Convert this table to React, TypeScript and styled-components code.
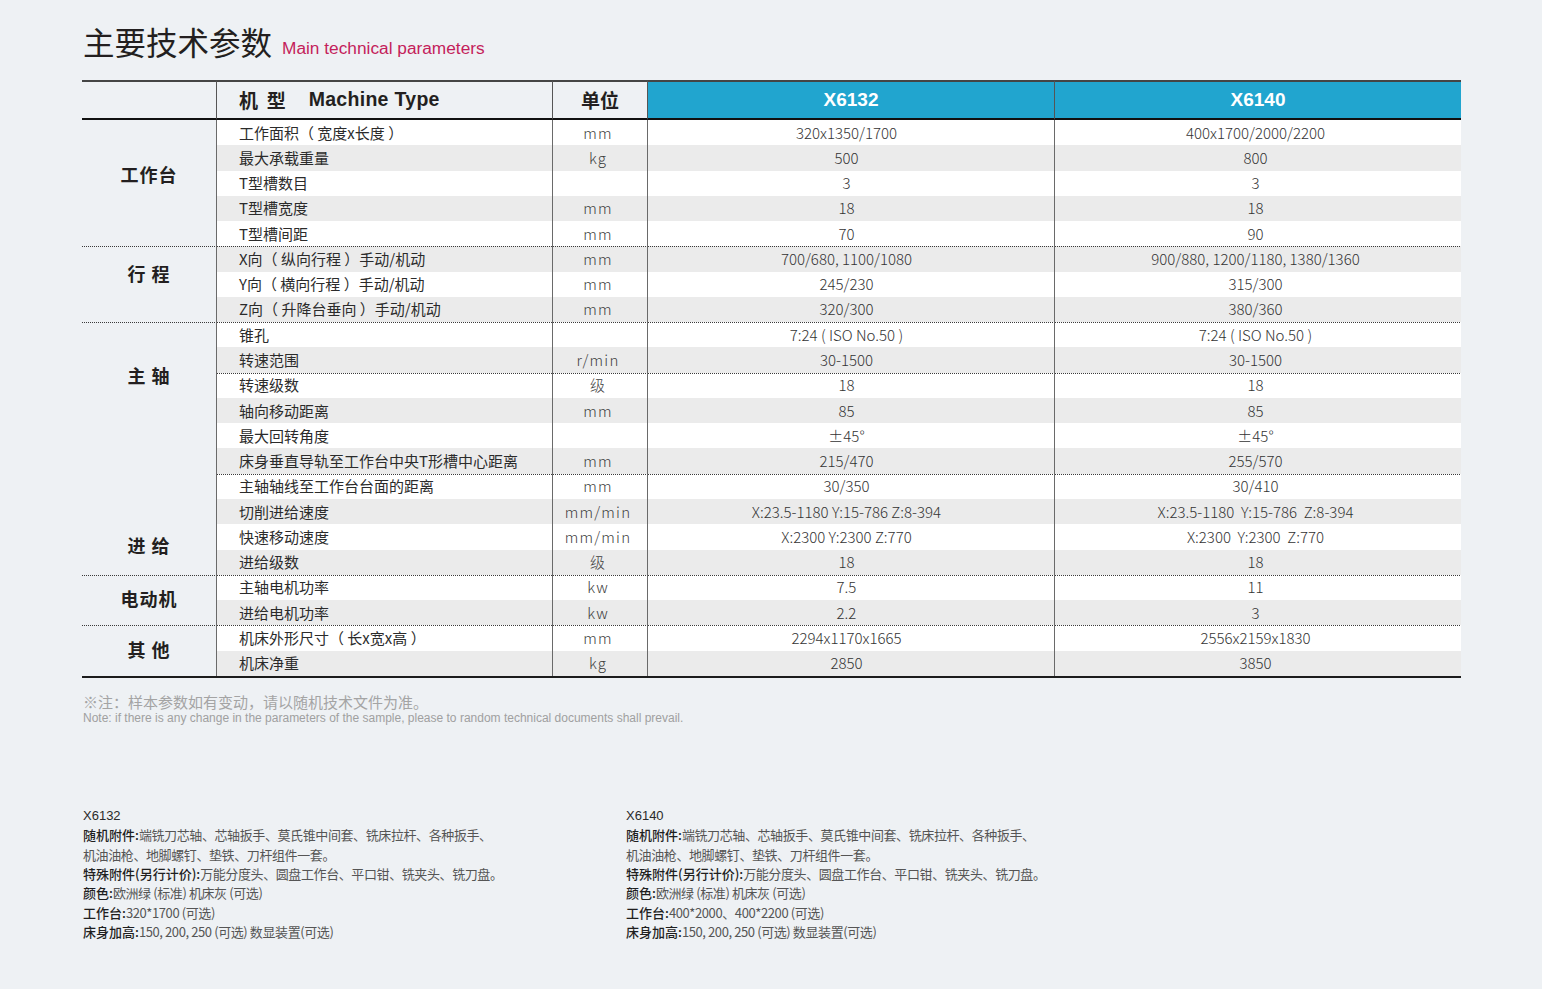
import React from 'react';
import styled, { createGlobalStyle } from 'styled-components';

const GlobalStyle = createGlobalStyle`
  html, body { margin: 0; padding: 0; background: #eef1f4; }
  body { font-family: "Noto Sans CJK SC", "Noto Sans", sans-serif; color: #231f20; }
`;

const CJK = `"Noto Sans CJK SC", "Noto Sans", sans-serif`;
const LATIN = `"Liberation Sans", Arial, "Noto Sans CJK SC", sans-serif`;

const Page = styled.div`
  width: 1542px;
  height: 989px;
  box-sizing: border-box;
  padding: 24px 0 0 83px;
  background: #eef1f4;
  overflow: hidden;
`;

const TitleRow = styled.div`
  display: flex;
  align-items: baseline;
  gap: 10px;
  height: 56px;
`;

const TitleCn = styled.h1`
  margin: 0;
  font-family: ${CJK};
  font-size: 31.5px;
  font-weight: 400;
  line-height: 34px;
  color: #231f20;
`;

const TitleEn = styled.span`
  font-family: ${LATIN};
  font-size: 17.3px;
  color: #c41e5b;
  position: relative;
  top: -1px;
`;

const Table = styled.div`
  display: grid;
  width: 1379px;
  margin-left: -1px;
  grid-template-columns: 134px 336px 95px 407px 407px;
  grid-template-rows: 40px repeat(22, 25.273px);
  border-bottom: 2px solid #1c1c1c;
`;

const HeadCell = styled.div<{ $accent?: boolean; $line?: boolean; $start?: boolean }>`
  box-sizing: border-box;
  display: flex;
  align-items: center;
  justify-content: ${p => (p.$start ? 'flex-start' : 'center')};
  padding-left: ${p => (p.$start ? '22px' : '0')};
  padding-bottom: 1px;
  border-top: 2px solid #454545;
  border-bottom: 2px solid #111;
  border-left: ${p => (p.$line ? '1px solid #555' : 'none')};
  background: ${p => (p.$accent ? '#21a5cf' : 'transparent')};
  color: ${p => (p.$accent ? '#fff' : '#231f20')};
  font-family: ${LATIN};
  font-size: 19px;
  font-weight: 700;
`;

const HeadCn = styled.span`
  font-family: ${CJK};
  font-weight: 700;
  font-size: 19px;
  line-height: 22px;
  white-space: pre;
`;

const HeadEn = styled.span`
  font-family: ${LATIN};
  font-weight: 700;
  font-size: 19.5px;
  letter-spacing: 0.3px;
  margin-left: 23px;
`;

const dashBg = `repeating-linear-gradient(to right, #3a3a3a 0 1px, transparent 1px 2px)`;

const GroupCell = styled.div<{ $row: number; $span: number; $dash: boolean }>`
  grid-column: 1;
  grid-row: ${p => p.$row} / span ${p => p.$span};
  display: flex;
  align-items: center;
  justify-content: center;
  background-image: ${p => (p.$dash ? dashBg : 'none')};
  background-size: 100% 1px;
  background-repeat: no-repeat;
  background-position: top left;
`;

const GroupLabel = styled.span<{ $shift: number }>`
  font-family: ${CJK};
  font-size: 18px;
  font-weight: 700;
  letter-spacing: 1px;
  white-space: pre;
  color: #231f20;
  transform: translateY(${p => p.$shift}px);
`;

const Cell = styled.div<{ $row: number; $col: number; $shade: boolean; $dash: boolean; $left?: boolean; $nudge?: number }>`
  grid-column: ${p => p.$col};
  grid-row: ${p => p.$row};
  box-sizing: border-box;
  display: flex;
  align-items: center;
  justify-content: ${p => (p.$left ? 'flex-start' : 'center')};
  padding-left: ${p => (p.$left ? '22px' : '0')};
  padding-right: ${p => p.$nudge ?? 0}px;
  border-left: 1px solid #6a6a6a;
  background-color: ${p => (p.$shade ? '#ebebeb' : '#ffffff')};
  background-image: ${p => (p.$dash ? dashBg : 'none')};
  background-size: 100% 1px;
  background-repeat: no-repeat;
  background-position: top left;
  white-space: pre;
  font-family: ${CJK};
  font-size: 15px;
  line-height: 20px;
`;

const ParamText = styled.span`
  color: #2b2b2b;
  font-weight: 400;
`;

const UnitText = styled.span`
  color: #3f3f3f;
  font-weight: 300;
  letter-spacing: 1.2px;
`;

const ValueText = styled.span`
  color: #333;
  font-weight: 300;
`;

const Notes = styled.div`
  margin-top: 15px;
  display: flex;
  flex-direction: column;
`;

const NoteCn = styled.div`
  font-family: ${CJK};
  font-size: 15px;
  line-height: 18px;
  color: #a4a4a4;
`;

const NoteEn = styled.div`
  font-family: ${LATIN};
  font-size: 12px;
  line-height: 15px;
  color: #a0a0a0;
`;

const Blocks = styled.div`
  margin-top: 80px;
  display: grid;
  grid-template-columns: 543px 543px;
`;

const Block = styled.div`
  display: flex;
  flex-direction: column;
  font-family: ${CJK};
  font-size: 13px;
  line-height: 19.4px;
  color: #4a4a4a;
`;

const BlockLine = styled.div`
  white-space: pre;
`;

const Model = styled.div`
  font-family: ${LATIN};
  font-size: 13px;
  color: #2a2a2a;
`;

const Label = styled.span`
  color: #1f1f1f;
  font-weight: 500;
`;

const Rest = styled.span`
  color: #555;
  font-weight: 400;
  letter-spacing: -0.4px;
`;

type Row = { name: string; unit: string; a: string; b: string; cut?: boolean };
type Group = { label: string; topDash: boolean; shift: number; rows: Row[] };

const groups: Group[] = [
  {
    label: '工作台',
    topDash: false,
    shift: -9,
    rows: [
      { name: '工作面积（ 宽度x长度 ）', unit: 'mm', a: '320x1350/1700', b: '400x1700/2000/2200' },
      { name: '最大承载重量', unit: 'kg', a: '500', b: '800' },
      { name: 'T型槽数目', unit: '', a: '3', b: '3' },
      { name: 'T型槽宽度', unit: 'mm', a: '18', b: '18' },
      { name: 'T型槽间距', unit: 'mm', a: '70', b: '90' },
    ],
  },
  {
    label: '行 程',
    topDash: true,
    shift: -11,
    rows: [
      { name: 'X向（ 纵向行程 ）手动/机动', unit: 'mm', a: '700/680, 1100/1080', b: '900/880, 1200/1180, 1380/1360' },
      { name: 'Y向（ 横向行程 ）手动/机动', unit: 'mm', a: '245/230', b: '315/300' },
      { name: 'Z向（ 升降台垂向 ）手动/机动', unit: 'mm', a: '320/300', b: '380/360' },
    ],
  },
  {
    label: '主 轴',
    topDash: true,
    shift: -23,
    rows: [
      { name: '锥孔', unit: '', a: '7:24 ( ISO No.50 )', b: '7:24 ( ISO No.50 )' },
      { name: '转速范围', unit: 'r/min', a: '30-1500', b: '30-1500' },
      { name: '转速级数', unit: '级', a: '18', b: '18', cut: true },
      { name: '轴向移动距离', unit: 'mm', a: '85', b: '85' },
      { name: '最大回转角度', unit: '', a: '±45°', b: '±45°' },
      { name: '床身垂直导轨至工作台中央T形槽中心距离', unit: 'mm', a: '215/470', b: '255/570' },
    ],
  },
  {
    label: '进 给',
    topDash: false,
    shift: 21,
    rows: [
      { name: '主轴轴线至工作台台面的距离', unit: 'mm', a: '30/350', b: '30/410', cut: true },
      { name: '切削进给速度', unit: 'mm/min', a: 'X:23.5-1180 Y:15-786 Z:8-394', b: 'X:23.5-1180  Y:15-786  Z:8-394' },
      { name: '快速移动速度', unit: 'mm/min', a: 'X:2300 Y:2300 Z:770', b: 'X:2300  Y:2300  Z:770' },
      { name: '进给级数', unit: '级', a: '18', b: '18' },
    ],
  },
  {
    label: '电动机',
    topDash: true,
    shift: -2,
    rows: [
      { name: '主轴电机功率', unit: 'kw', a: '7.5', b: '11' },
      { name: '进给电机功率', unit: 'kw', a: '2.2', b: '3' },
    ],
  },
  {
    label: '其 他',
    topDash: true,
    shift: -2,
    rows: [
      { name: '机床外形尺寸（ 长x宽x高 ）', unit: 'mm', a: '2294x1170x1665', b: '2556x2159x1830' },
      { name: '机床净重', unit: 'kg', a: '2850', b: '3850' },
    ],
  },
];

type Line = { label?: string; text: string };

const blocks: { model: string; lines: Line[] }[] = [
  {
    model: 'X6132',
    lines: [
      { label: '随机附件:', text: '端铣刀芯轴、芯轴扳手、莫氏锥中间套、铣床拉杆、各种扳手、' },
      { text: '机油油枪、地脚螺钉、垫铁、刀杆组件一套。' },
      { label: '特殊附件(另行计价):', text: '万能分度头、圆盘工作台、平口钳、铣夹头、铣刀盘。' },
      { label: '颜色:', text: '欧洲绿 (标准) 机床灰 (可选)' },
      { label: '工作台:', text: '320*1700 (可选)' },
      { label: '床身加高:', text: '150, 200, 250 (可选) 数显装置(可选)' },
    ],
  },
  {
    model: 'X6140',
    lines: [
      { label: '随机附件:', text: '端铣刀芯轴、芯轴扳手、莫氏锥中间套、铣床拉杆、各种扳手、' },
      { text: '机油油枪、地脚螺钉、垫铁、刀杆组件一套。' },
      { label: '特殊附件(另行计价):', text: '万能分度头、圆盘工作台、平口钳、铣夹头、铣刀盘。' },
      { label: '颜色:', text: '欧洲绿 (标准) 机床灰 (可选)' },
      { label: '工作台:', text: '400*2000、400*2200 (可选)' },
      { label: '床身加高:', text: '150, 200, 250 (可选) 数显装置(可选)' },
    ],
  },
];

function renderBody() {
  const out: React.ReactNode[] = [];
  let rowIndex = 0;
  groups.forEach((g, gi) => {
    const startRow = rowIndex + 2;
    out.push(
      <GroupCell key={`g${gi}`} $row={startRow} $span={g.rows.length} $dash={g.topDash}>
        <GroupLabel $shift={g.shift}>{g.label}</GroupLabel>
      </GroupCell>
    );
    g.rows.forEach((r, ri) => {
      const gridRow = rowIndex + 2;
      const shade = rowIndex % 2 === 1;
      const dash = ri === 0 ? g.topDash || !!r.cut : !!r.cut;
      out.push(
        <Cell key={`p${rowIndex}`} $row={gridRow} $col={2} $shade={shade} $dash={dash} $left>
          <ParamText>{r.name}</ParamText>
        </Cell>,
        <Cell key={`u${rowIndex}`} $row={gridRow} $col={3} $shade={shade} $dash={dash} $nudge={4}>
          <UnitText>{r.unit}</UnitText>
        </Cell>,
        <Cell key={`a${rowIndex}`} $row={gridRow} $col={4} $shade={shade} $dash={dash} $nudge={9}>
          <ValueText>{r.a}</ValueText>
        </Cell>,
        <Cell key={`b${rowIndex}`} $row={gridRow} $col={5} $shade={shade} $dash={dash} $nudge={5}>
          <ValueText>{r.b}</ValueText>
        </Cell>
      );
      rowIndex += 1;
    });
  });
  return out;
}

export default function App() {
  return (
    <>
      <GlobalStyle />
      <Page>
        <TitleRow>
          <TitleCn>主要技术参数</TitleCn>
          <TitleEn>Main technical parameters</TitleEn>
        </TitleRow>
        <Table>
          <HeadCell />
          <HeadCell $line $start>
            <HeadCn>{'机  型'}</HeadCn>
            <HeadEn>Machine Type</HeadEn>
          </HeadCell>
          <HeadCell $line>
            <HeadCn>单位</HeadCn>
          </HeadCell>
          <HeadCell $line $accent>X6132</HeadCell>
          <HeadCell $line $accent>X6140</HeadCell>
          {renderBody()}
        </Table>
        <Notes>
          <NoteCn>※注：样本参数如有变动，请以随机技术文件为准。</NoteCn>
          <NoteEn>
            Note: if there is any change in the parameters of the sample, please to random technical documents shall prevail.
          </NoteEn>
        </Notes>
        <Blocks>
          {blocks.map(b => (
            <Block key={b.model}>
              <Model>{b.model}</Model>
              {b.lines.map((l, i) => (
                <BlockLine key={i}>
                  {l.label && <Label>{l.label}</Label>}
                  <Rest>{l.text}</Rest>
                </BlockLine>
              ))}
            </Block>
          ))}
        </Blocks>
      </Page>
    </>
  );
}
